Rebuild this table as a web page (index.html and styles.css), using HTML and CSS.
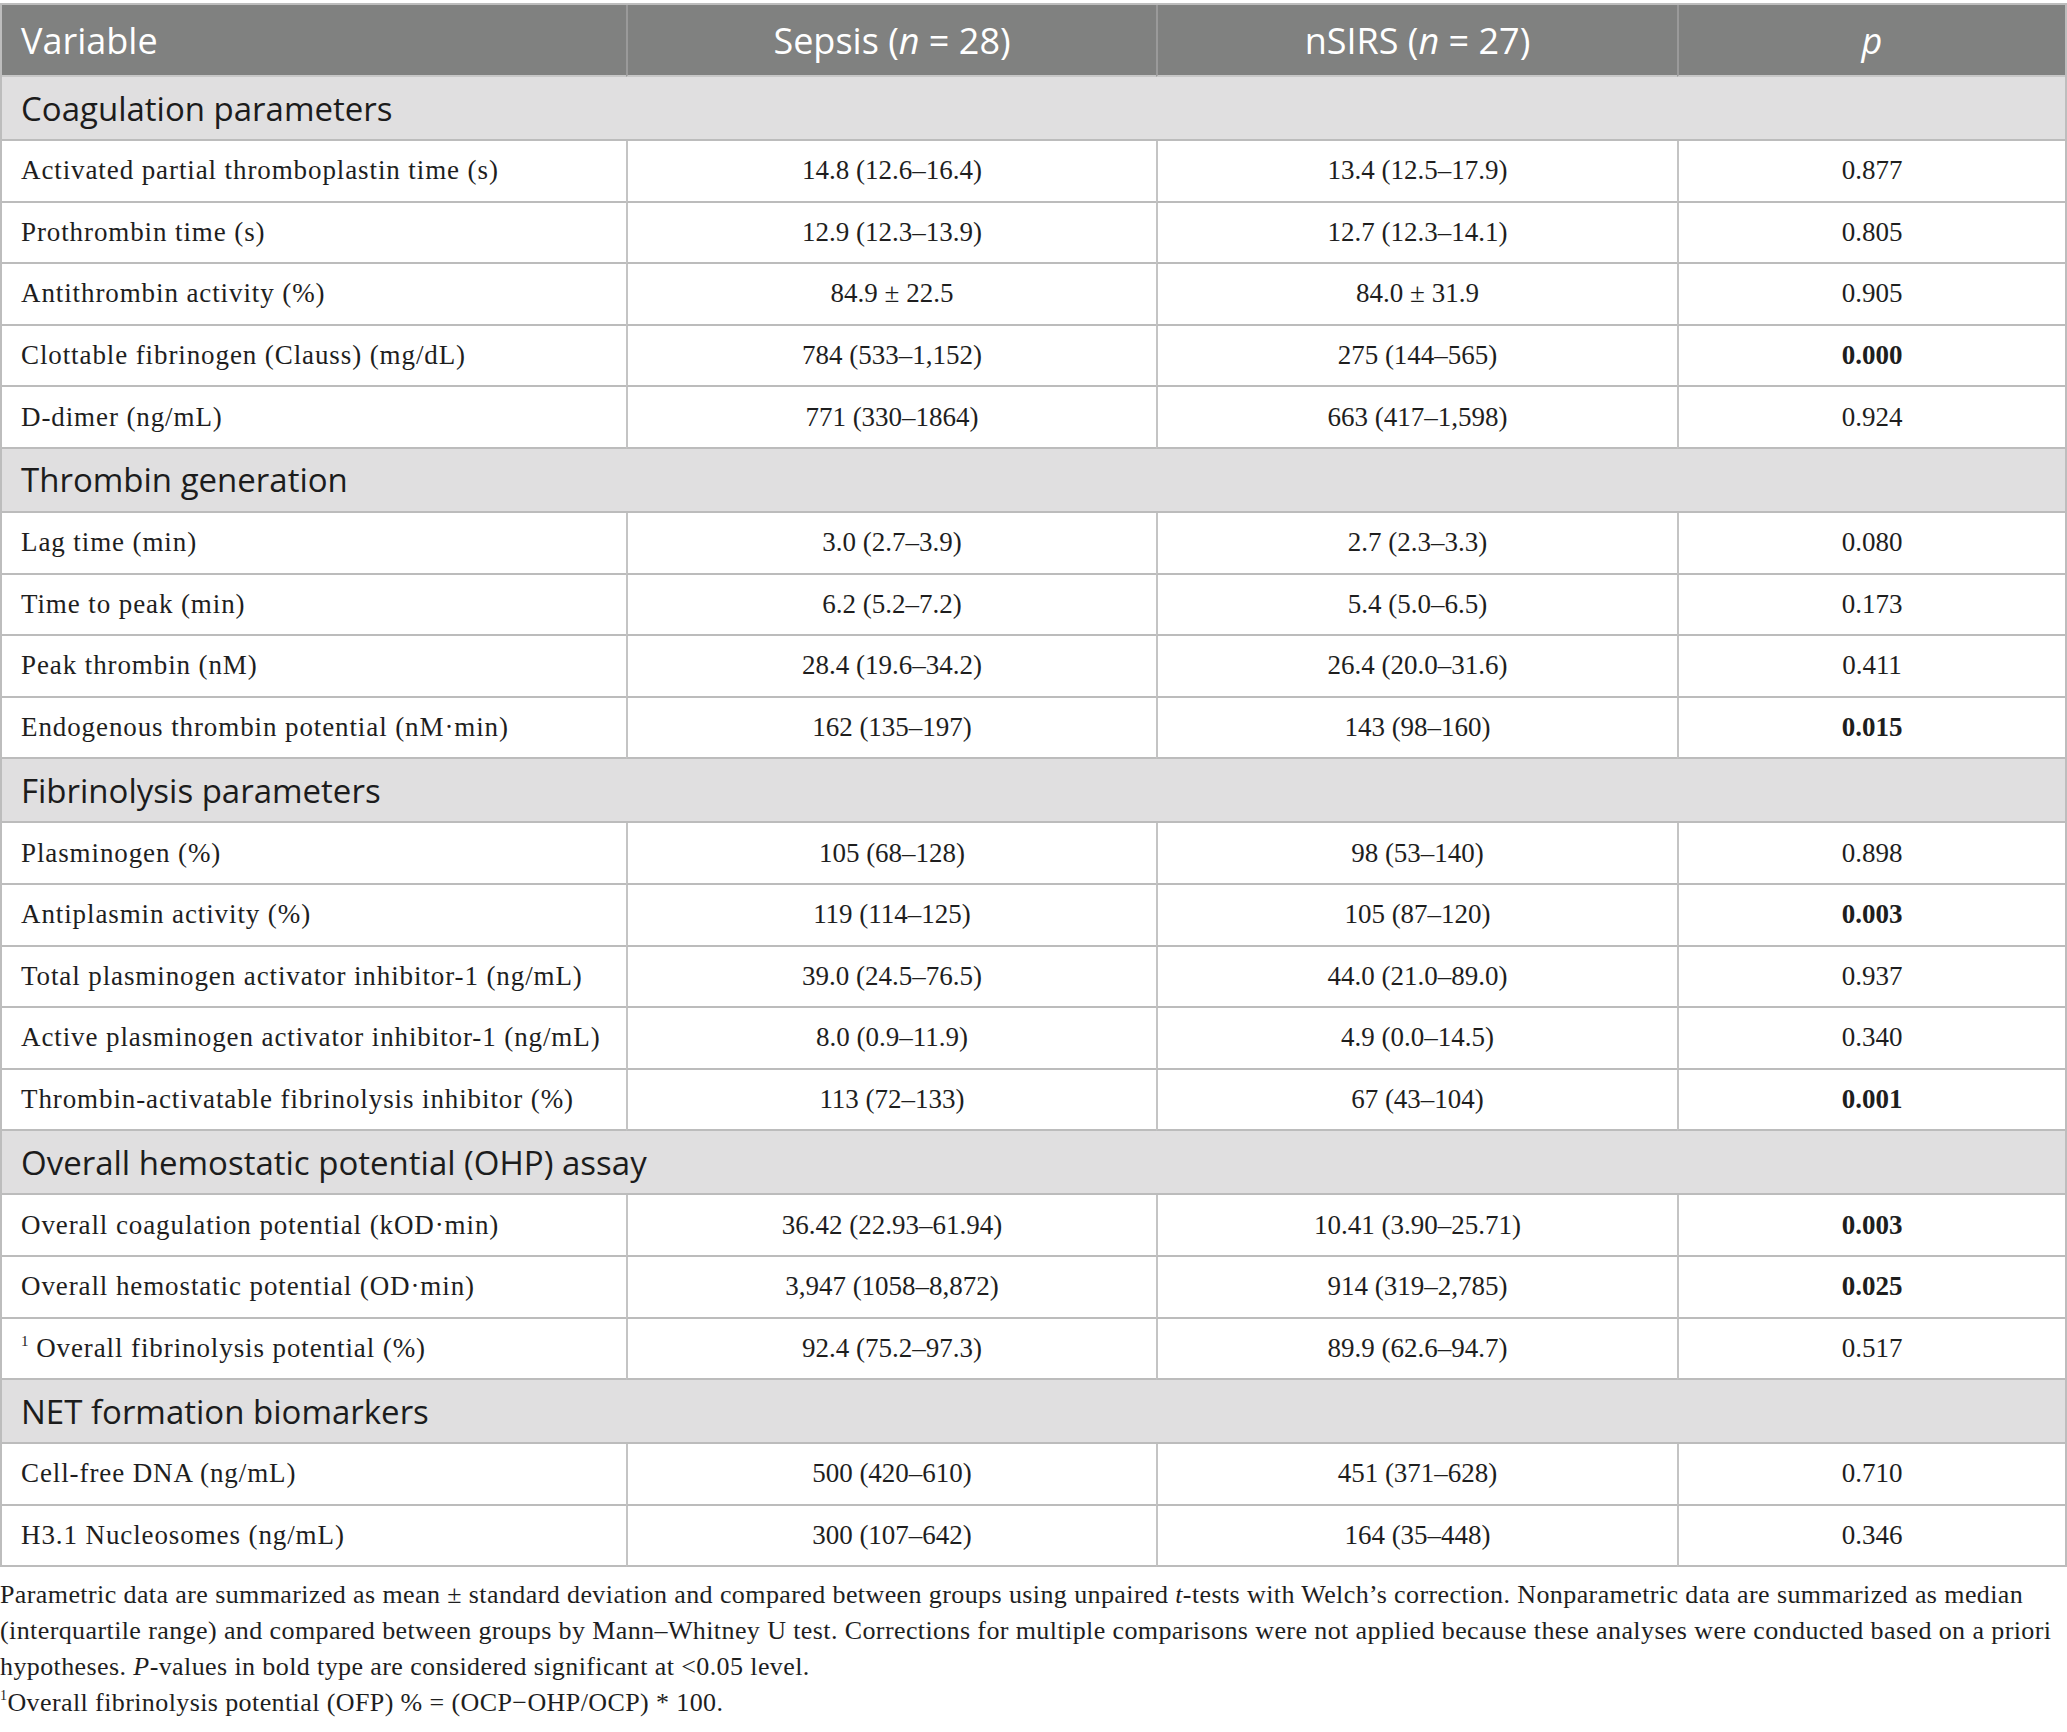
FILE: index.html
```html
<!DOCTYPE html>
<html lang="en">
<head>
<meta charset="utf-8">
<title>Table</title>
<link rel="stylesheet" href="styles.css">
</head>
<body>
<div class="tbl">
  <div class="c hd first"><span>Variable</span></div>
  <div class="c hd ctr"><span>Sepsis (<i>n</i> = 28)</span></div>
  <div class="c hd ctr"><span>nSIRS (<i>n</i> = 27)</span></div>
  <div class="c hd ctr"><span><i>p</i></span></div>

  <div class="sec"><span>Coagulation parameters</span></div>
  <div class="c d first"><span>Activated partial thromboplastin time (s)</span></div><div class="c d ctr"><span>14.8 (12.6–16.4)</span></div><div class="c d ctr"><span>13.4 (12.5–17.9)</span></div><div class="c d ctr"><span>0.877</span></div>
  <div class="c d first"><span>Prothrombin time (s)</span></div><div class="c d ctr"><span>12.9 (12.3–13.9)</span></div><div class="c d ctr"><span>12.7 (12.3–14.1)</span></div><div class="c d ctr"><span>0.805</span></div>
  <div class="c d first"><span>Antithrombin activity (%)</span></div><div class="c d ctr"><span>84.9 ± 22.5</span></div><div class="c d ctr"><span>84.0 ± 31.9</span></div><div class="c d ctr"><span>0.905</span></div>
  <div class="c d first"><span>Clottable fibrinogen (Clauss) (mg/dL)</span></div><div class="c d ctr"><span>784 (533–1,152)</span></div><div class="c d ctr"><span>275 (144–565)</span></div><div class="c d ctr"><b>0.000</b></div>
  <div class="c d first"><span>D-dimer (ng/mL)</span></div><div class="c d ctr"><span>771 (330–1864)</span></div><div class="c d ctr"><span>663 (417–1,598)</span></div><div class="c d ctr"><span>0.924</span></div>

  <div class="sec"><span>Thrombin generation</span></div>
  <div class="c d first"><span>Lag time (min)</span></div><div class="c d ctr"><span>3.0 (2.7–3.9)</span></div><div class="c d ctr"><span>2.7 (2.3–3.3)</span></div><div class="c d ctr"><span>0.080</span></div>
  <div class="c d first"><span>Time to peak (min)</span></div><div class="c d ctr"><span>6.2 (5.2–7.2)</span></div><div class="c d ctr"><span>5.4 (5.0–6.5)</span></div><div class="c d ctr"><span>0.173</span></div>
  <div class="c d first"><span>Peak thrombin (nM)</span></div><div class="c d ctr"><span>28.4 (19.6–34.2)</span></div><div class="c d ctr"><span>26.4 (20.0–31.6)</span></div><div class="c d ctr"><span>0.411</span></div>
  <div class="c d first"><span>Endogenous thrombin potential (nM·min)</span></div><div class="c d ctr"><span>162 (135–197)</span></div><div class="c d ctr"><span>143 (98–160)</span></div><div class="c d ctr"><b>0.015</b></div>

  <div class="sec"><span>Fibrinolysis parameters</span></div>
  <div class="c d first"><span>Plasminogen (%)</span></div><div class="c d ctr"><span>105 (68–128)</span></div><div class="c d ctr"><span>98 (53–140)</span></div><div class="c d ctr"><span>0.898</span></div>
  <div class="c d first"><span>Antiplasmin activity (%)</span></div><div class="c d ctr"><span>119 (114–125)</span></div><div class="c d ctr"><span>105 (87–120)</span></div><div class="c d ctr"><b>0.003</b></div>
  <div class="c d first"><span>Total plasminogen activator inhibitor-1 (ng/mL)</span></div><div class="c d ctr"><span>39.0 (24.5–76.5)</span></div><div class="c d ctr"><span>44.0 (21.0–89.0)</span></div><div class="c d ctr"><span>0.937</span></div>
  <div class="c d first"><span>Active plasminogen activator inhibitor-1 (ng/mL)</span></div><div class="c d ctr"><span>8.0 (0.9–11.9)</span></div><div class="c d ctr"><span>4.9 (0.0–14.5)</span></div><div class="c d ctr"><span>0.340</span></div>
  <div class="c d first"><span>Thrombin-activatable fibrinolysis inhibitor (%)</span></div><div class="c d ctr"><span>113 (72–133)</span></div><div class="c d ctr"><span>67 (43–104)</span></div><div class="c d ctr"><b>0.001</b></div>

  <div class="sec"><span>Overall hemostatic potential (OHP) assay</span></div>
  <div class="c d first"><span>Overall coagulation potential (kOD·min)</span></div><div class="c d ctr"><span>36.42 (22.93–61.94)</span></div><div class="c d ctr"><span>10.41 (3.90–25.71)</span></div><div class="c d ctr"><b>0.003</b></div>
  <div class="c d first"><span>Overall hemostatic potential (OD·min)</span></div><div class="c d ctr"><span>3,947 (1058–8,872)</span></div><div class="c d ctr"><span>914 (319–2,785)</span></div><div class="c d ctr"><b>0.025</b></div>
  <div class="c d first"><span><sup class="sup">1</sup> Overall fibrinolysis potential (%)</span></div><div class="c d ctr"><span>92.4 (75.2–97.3)</span></div><div class="c d ctr"><span>89.9 (62.6–94.7)</span></div><div class="c d ctr"><span>0.517</span></div>

  <div class="sec"><span>NET formation biomarkers</span></div>
  <div class="c d first"><span>Cell-free DNA (ng/mL)</span></div><div class="c d ctr"><span>500 (420–610)</span></div><div class="c d ctr"><span>451 (371–628)</span></div><div class="c d ctr"><span>0.710</span></div>
  <div class="c d first"><span>H3.1 Nucleosomes (ng/mL)</span></div><div class="c d ctr"><span>300 (107–642)</span></div><div class="c d ctr"><span>164 (35–448)</span></div><div class="c d ctr"><span>0.346</span></div>
</div>
<div class="notes">
  <p class="note">Parametric data are summarized as mean ± standard deviation and compared between groups using unpaired <i>t</i>-tests with Welch’s correction. Nonparametric data are summarized as median (interquartile range) and compared between groups by Mann–Whitney U test. Corrections for multiple comparisons were not applied because these analyses were conducted based on a priori hypotheses. <i>P</i>-values in bold type are considered significant at &lt;0.05 level.</p>
  <p class="note"><sup class="nsup">1</sup>Overall fibrinolysis potential (OFP) % = (OCP−OHP/OCP) * 100.</p>
</div>
</body>
</html>
```
FILE: styles.css
```css
html, body {
  margin: 0;
  padding: 0;
  background: #ffffff;
}
body {
  padding-top: 3px;
}
.tbl {
  display: grid;
  grid-template-columns: 624px 530px 521px 1fr;
  border: 2px solid #bdbdbd;
  border-bottom: none;
  width: 2067px;
  box-sizing: border-box;
}
.c {
  box-sizing: border-box;
  display: flex;
  align-items: center;
  border-bottom: 2px solid #bcbcbc;
  border-left: 2px solid #c4c4c4;
  white-space: nowrap;
}
.c.first {
  border-left: none;
  padding-left: 19px;
}
.ctr {
  justify-content: center;
}
.hd {
  height: 72px;
  background: #808180;
  color: #ffffff;
  font-family: "Open Sans", "Liberation Sans", sans-serif;
  font-size: 36px;
  border-left-color: #9a9a9a;
  border-bottom-color: #c7c7c7;
}
.hd.first { border-left: none; }
.sec {
  grid-column: 1 / -1;
  box-sizing: border-box;
  height: 64px;
  display: flex;
  align-items: center;
  padding-left: 19px;
  background: #e0dfe0;
  color: #1c1c1c;
  font-family: "Open Sans", "Liberation Sans", sans-serif;
  font-size: 33px;
  border-bottom: 2px solid #bcbcbc;
}
.d {
  height: 61.6px;
  font-family: "Liberation Serif", serif;
  font-size: 27px;
  color: #1e1e1e;
}
.d.first {
  letter-spacing: 0.9px;
}
.d b { font-weight: bold; }
.sup {
  font-size: 15px;
  vertical-align: 11px;
  line-height: 0;
  letter-spacing: 0;
}
.notes {
  padding-top: 10px;
}
.note {
  margin: 0;
  font-family: "Liberation Serif", serif;
  font-size: 26px;
  letter-spacing: 0.4px;
  line-height: 36px;
  color: #1e1e1e;
}
.nsup {
  font-size: 14px;
  vertical-align: 11px;
  line-height: 0;
}
```
